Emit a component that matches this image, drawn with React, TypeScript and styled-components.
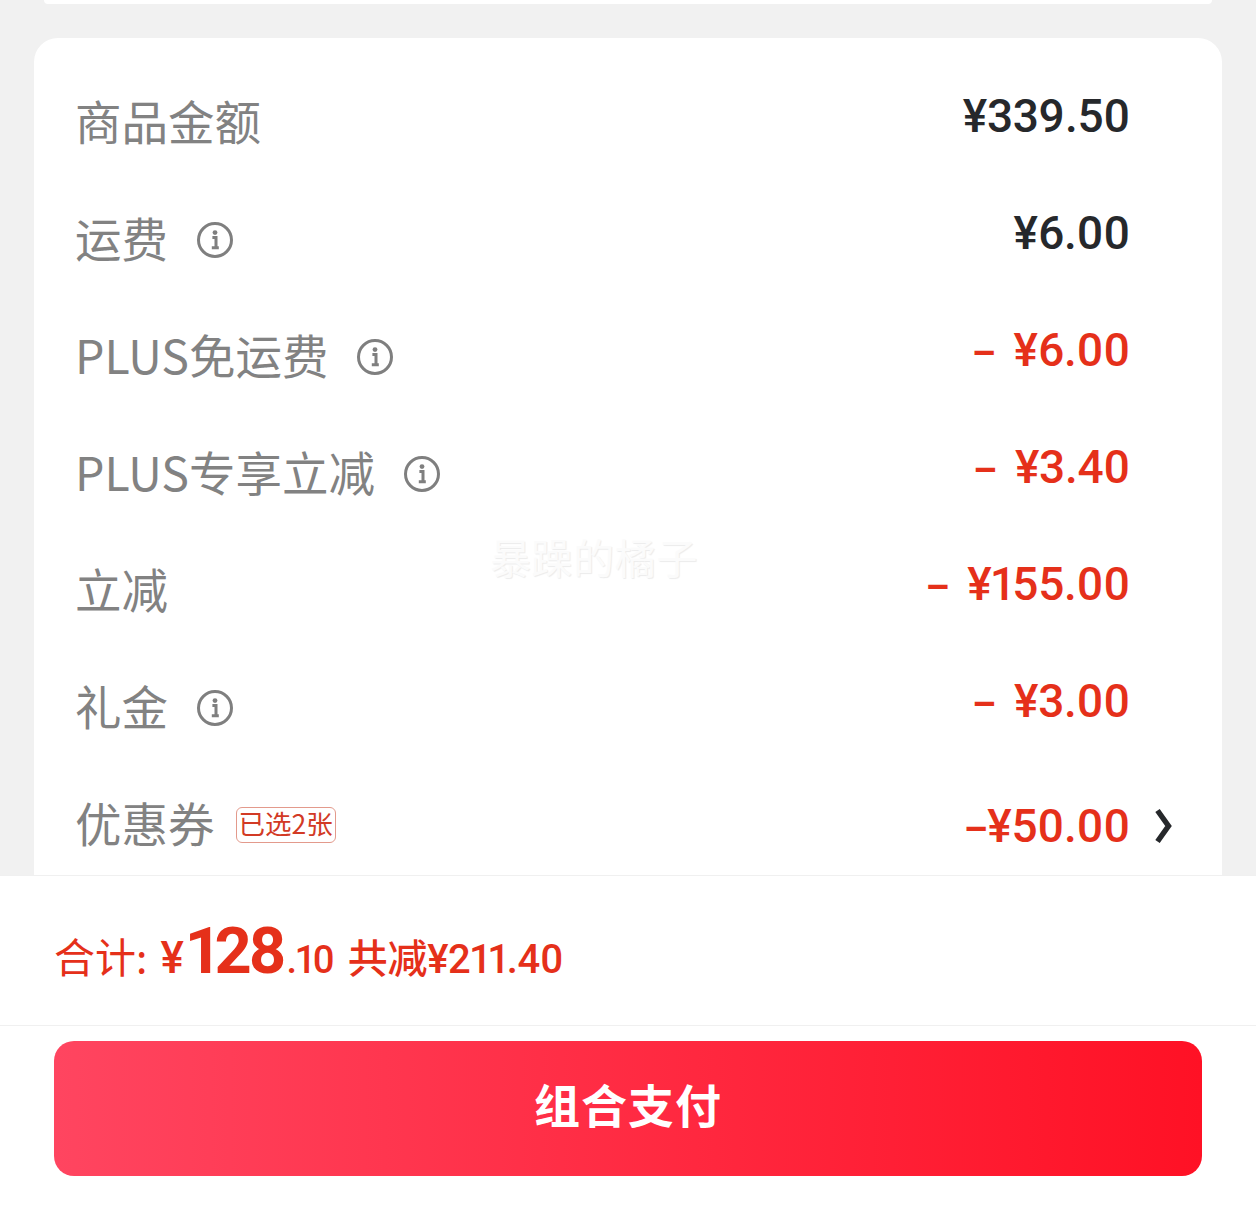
import React from 'react';
import styled, { createGlobalStyle } from 'styled-components';

const CJK = `"Noto Sans CJK SC", "Noto Sans", sans-serif`;
const NUM = `Roboto, "Noto Sans CJK SC", sans-serif`;
const RED = '#e5301a';

const GlobalStyle = createGlobalStyle`
  html, body {
    margin: 0;
    padding: 0;
    background: #f1f1f1;
  }
`;

const Page = styled.div`
  width: 1256px;
  height: 1217px;
  display: flex;
  flex-direction: column;
  overflow: hidden;
  background: #f1f1f1;
  font-family: ${CJK};
`;

const Scroller = styled.div`
  height: 875px;
  padding: 0 34px;
  box-sizing: border-box;
  overflow: hidden;
  flex-shrink: 0;
`;

const PrevCardEdge = styled.div`
  height: 4px;
  margin: 0 10px 34px;
  background: #fff;
  border-radius: 0 0 20px 20px;
`;

const Card = styled.div`
  position: relative;
  background: #fff;
  border-radius: 24px;
  padding-top: 27px;
  height: 900px;
  box-sizing: border-box;
`;

const Row = styled.div`
  height: 117px;
  display: grid;
  grid-template-columns: 1fr auto 92px;
  align-items: center;
  padding-left: 41px;
`;

const Label = styled.div`
  display: flex;
  align-items: center;
  font-size: 46.5px;
  line-height: 60px;
  margin-bottom: 8px;
  color: #828282;
`;

const Value = styled.div<{ $discount?: boolean; $flat?: boolean }>`
  font-family: ${NUM};
  font-weight: 500;
  font-size: 46px;
  line-height: 60px;
  white-space: pre;
  letter-spacing: -0.3px;
  font-feature-settings: 'pnum';
  color: ${(p) => (p.$discount ? RED : '#26282b')};
  margin-bottom: ${(p) => (p.$flat ? '0' : '16px')};
`;

const Dash = styled.span`
  font-size: 38px;
  line-height: 0;
  font-weight: 700;
`;

const InfoIcon = styled.svg`
  width: 38px;
  height: 38px;
  margin: 6px 0 0 28px;
  color: #7f7f7f;
`;

const CouponTag = styled.span`
  display: inline-flex;
  align-items: center;
  height: 30px;
  margin: 6px 0 0 21px;
  padding: 0 2px 4px;
  border: 1px solid #e39a8c;
  border-radius: 6px;
  font-size: 26.5px;
  color: #d23a25;
  white-space: nowrap;
`;

const Chevron = styled.svg`
  width: 18px;
  height: 36px;
  margin-left: 25px;
  color: #26282b;
`;

const Watermark = styled.div`
  position: absolute;
  left: 456px;
  top: 493px;
  font-size: 41px;
  line-height: 50px;
  letter-spacing: 0.6px;
  color: #fbfbfb;
  text-shadow: 1px 1px 1px #ececec;
`;

const Footer = styled.div`
  flex: 1;
  background: #fff;
  border-top: 1px solid #f0f0f0;
`;

const TotalBar = styled.div`
  height: 150px;
  box-sizing: border-box;
  border-bottom: 1px solid #f0f0f0;
  display: flex;
  align-items: baseline;
  padding: 37px 0 0 54px;
  color: ${RED};
  white-space: pre;
`;

const TotalLabel = styled.span`
  font-size: 41px;
`;

const Amount = styled.span<{ $size: number; $bold?: boolean; $gap?: number; $track?: number }>`
  font-family: ${NUM};
  font-size: ${(p) => p.$size}px;
  font-weight: ${(p) => (p.$bold ? 700 : 500)};
  font-feature-settings: 'pnum';
  margin-left: ${(p) => p.$gap ?? 0}px;
  letter-spacing: ${(p) => p.$track ?? 0}px;
`;

const Saved = styled.span`
  margin-left: 14px;
  font-size: 40px;
  font-family: ${NUM};
  font-weight: 500;
  font-feature-settings: 'pnum';
  letter-spacing: -0.3px;
`;

const PayButton = styled.button`
  display: block;
  width: 1148px;
  height: 135px;
  margin: 15px 0 0 54px;
  padding: 0 0 12px;
  border: none;
  border-radius: 20px;
  background: linear-gradient(90deg, #ff4560 0%, #ff1125 100%);
  color: #fff;
  font-family: ${CJK};
  font-size: 46px;
  font-weight: 700;
  letter-spacing: 1px;
`;

function Info() {
  return (
    <InfoIcon viewBox="0 0 38 38" fill="none">
      <circle cx="19" cy="19" r="16.5" stroke="currentColor" strokeWidth="3" />
      <circle cx="19" cy="11.6" r="2.4" fill="currentColor" />
      <path d="M16.4 16.4h3.6v10.4M15.8 26.8h7" stroke="currentColor" strokeWidth="3" />
    </InfoIcon>
  );
}

type LineItem = { label: string; value: string; info?: boolean; discount?: boolean };

const items: LineItem[] = [
  { label: '商品金额', value: '¥339.50' },
  { label: '运费', value: '¥6.00', info: true },
  { label: 'PLUS免运费', value: '¥6.00', info: true, discount: true },
  { label: 'PLUS专享立减', value: '¥3.40', info: true, discount: true },
  { label: '立减', value: '¥155.00', discount: true },
  { label: '礼金', value: '¥3.00', info: true, discount: true },
];

export default function App() {
  return (
    <Page>
      <GlobalStyle />
      <Scroller>
        <PrevCardEdge />
        <Card>
          <Watermark>暴躁的橘子</Watermark>
          {items.map((item) => (
            <Row key={item.label}>
              <Label>
                {item.label}
                {item.info && <Info />}
              </Label>
              <Value $discount={item.discount}>
                {item.discount && <Dash>–  </Dash>}
                {item.value}
              </Value>
              <span />
            </Row>
          ))}
          <Row>
            <Label>
              优惠券
              <CouponTag>已选2张</CouponTag>
            </Label>
            <Value $discount $flat>
              <Dash>–</Dash>¥50.00
            </Value>
            <Chevron viewBox="0 0 18 36" fill="none">
              <path d="M2.5 2.5 13.5 18 2.5 33.5" stroke="currentColor" strokeWidth="5.4" />
            </Chevron>
          </Row>
        </Card>
      </Scroller>
      <Footer>
        <TotalBar>
          <TotalLabel>合计:</TotalLabel>
          <Amount $size={44} $gap={13}>¥</Amount>
          <Amount $size={65} $bold $gap={3} $track={-3.5}>128</Amount>
          <Amount $size={38} $gap={3} $track={-1}>.10</Amount>
          <Saved>共减¥211.40</Saved>
        </TotalBar>
        <PayButton>组合支付</PayButton>
      </Footer>
    </Page>
  );
}
